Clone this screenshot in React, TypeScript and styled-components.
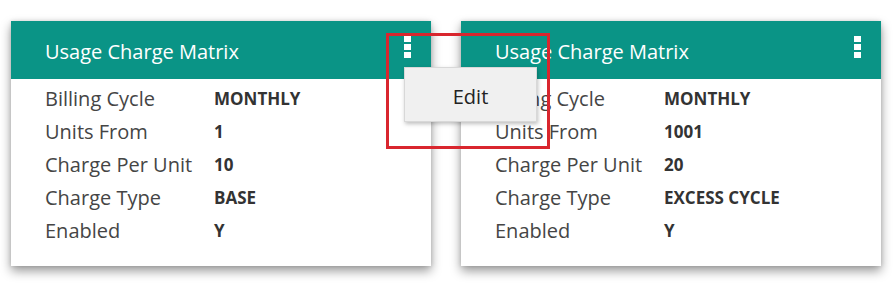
import styled, { createGlobalStyle } from "styled-components";

const GlobalStyle = createGlobalStyle`
  body {
    margin: 0;
    background: #ffffff;
    font-family: "Open Sans", "Noto Sans", sans-serif;
  }
`;

const Page = styled.div`
  position: relative;
  display: flex;
  gap: 30px;
  padding: 21px 0 0 11px;
  width: 893px;
  height: 287px;
  box-sizing: border-box;
`;

const Card = styled.div`
  position: relative;
  width: 420px;
  height: 245px;
  background: #ffffff;
  box-shadow: 0 5px 10px rgba(0, 0, 0, 0.4), 0 0 4px rgba(0, 0, 0, 0.12);
  display: flex;
  flex-direction: column;
`;

const Header = styled.div`
  height: 58px;
  background: #0a9486;
  display: flex;
  align-items: center;
  justify-content: space-between;
  padding: 0 20px 0 34px;
  box-sizing: border-box;
`;

const Title = styled.div`
  color: #ffffff;
  font-size: 20px;
  margin-top: 3px;
`;

const Kebab = styled.svg`
  display: block;
  margin-top: -6px;
`;

const Body = styled.div`
  padding: 3px 0 0 34px;
`;

const Row = styled.div`
  display: grid;
  grid-template-columns: 169px 1fr;
  align-items: center;
  height: 33px;
`;

const Label = styled.div`
  color: #454545;
  font-size: 20px;
`;

const Value = styled.div`
  color: #333333;
  font-size: 17px;
  font-weight: 700;
`;

const Menu = styled.div`
  position: absolute;
  left: 393px;
  top: 46px;
  width: 133px;
  height: 55px;
  background: #f0f0f0;
  border: 1px solid #d8d8d8;
  box-sizing: border-box;
  box-shadow: 1px 2px 4px rgba(0, 0, 0, 0.25);
  display: flex;
  align-items: center;
  justify-content: center;
  z-index: 2;
`;

const MenuItem = styled.div`
  color: #222222;
  font-size: 20px;
  margin-top: 3px;
`;

const Highlight = styled.div`
  position: absolute;
  left: 386px;
  top: 33px;
  width: 164px;
  height: 116px;
  border: 3px solid #d9262e;
  box-sizing: border-box;
  z-index: 3;
  pointer-events: none;
`;

type Item = { label: string; value: string };

const cards: Item[][] = [
  [
    { label: "Billing Cycle", value: "MONTHLY" },
    { label: "Units From", value: "1" },
    { label: "Charge Per Unit", value: "10" },
    { label: "Charge Type", value: "BASE" },
    { label: "Enabled", value: "Y" },
  ],
  [
    { label: "Billing Cycle", value: "MONTHLY" },
    { label: "Units From", value: "1001" },
    { label: "Charge Per Unit", value: "20" },
    { label: "Charge Type", value: "EXCESS CYCLE" },
    { label: "Enabled", value: "Y" },
  ],
];

function DotsIcon() {
  return (
    <Kebab width="7" height="22" viewBox="0 0 7 22">
      <rect x="0" y="0" width="7" height="6" fill="#ffffff" />
      <rect x="0" y="8" width="7" height="6" fill="#ffffff" />
      <rect x="0" y="16" width="7" height="6" fill="#ffffff" />
    </Kebab>
  );
}

function MatrixCard({ items, open }: { items: Item[]; open?: boolean }) {
  return (
    <Card>
      <Header>
        <Title>Usage Charge Matrix</Title>
        <DotsIcon />
      </Header>
      <Body>
        {items.map((it) => (
          <Row key={it.label}>
            <Label>{it.label}</Label>
            <Value>{it.value}</Value>
          </Row>
        ))}
      </Body>
      {open && (
        <Menu>
          <MenuItem>Edit</MenuItem>
        </Menu>
      )}
    </Card>
  );
}

export default function App() {
  return (
    <>
      <GlobalStyle />
      <Page>
        <MatrixCard items={cards[0]} open />
        <MatrixCard items={cards[1]} />
        <Highlight />
      </Page>
    </>
  );
}
